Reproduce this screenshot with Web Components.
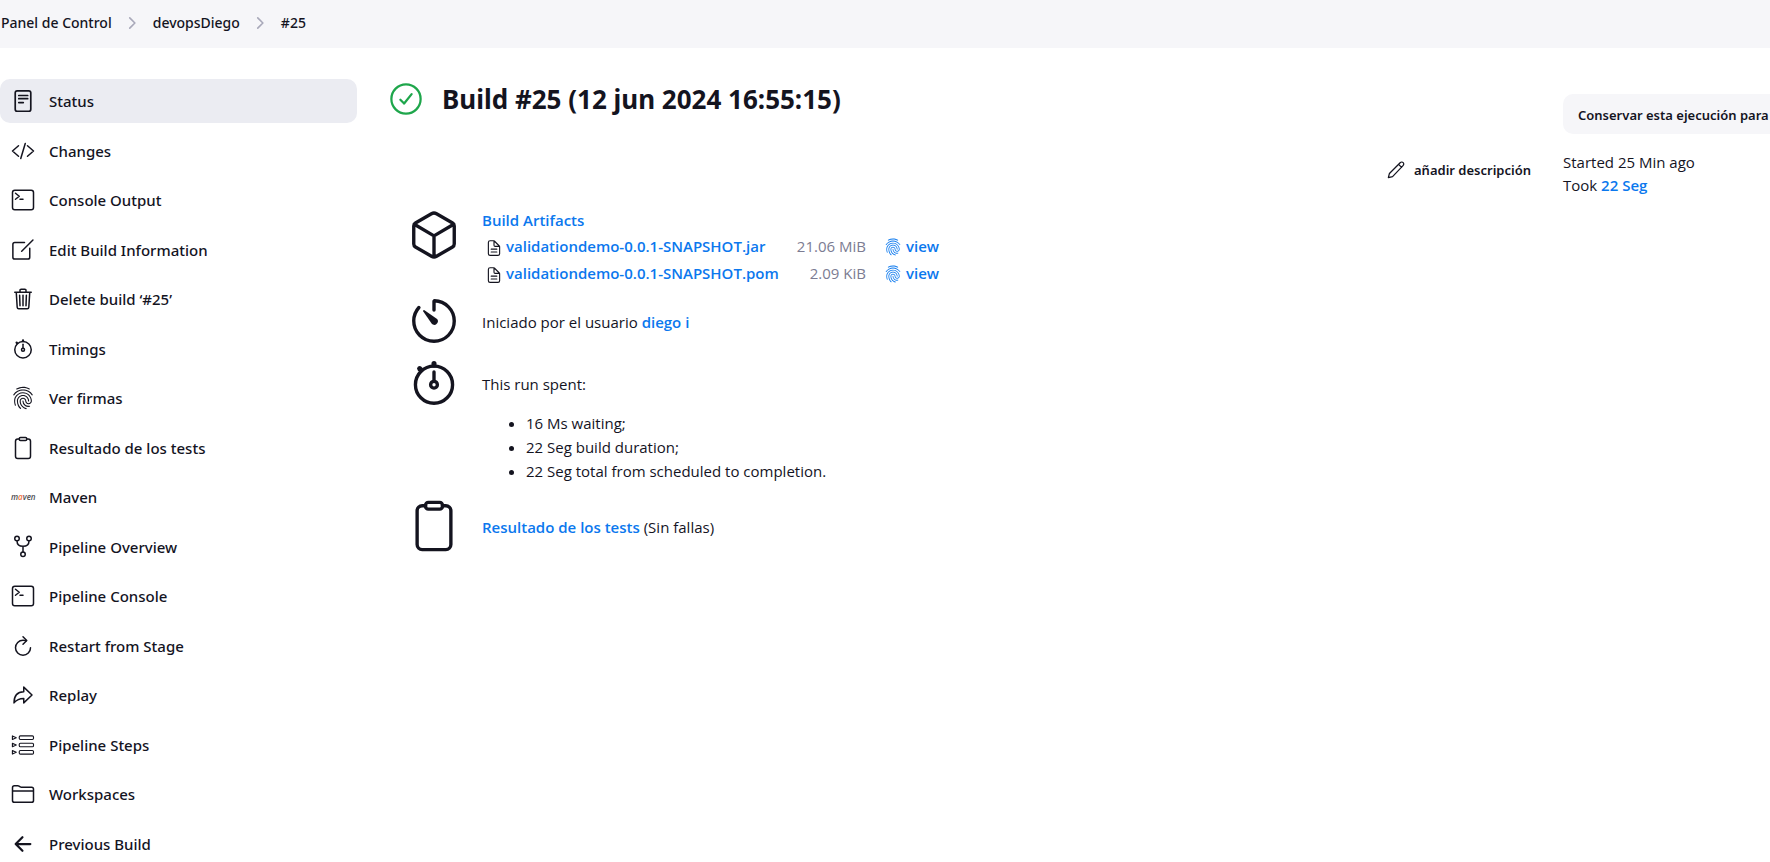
<!DOCTYPE html>
<html lang="es">
<head>
<meta charset="utf-8">
<meta name="viewport" content="width=device-width, initial-scale=1">
<title>Build #25</title>
<style>
  body {
    margin: 0;
    background: #fff;
    color: #14141f;
    font: 400 15px/24px "Noto Sans", "Open Sans", sans-serif;
    --link: #0b78ee;
    --muted: #7c7c92;
    --surface: #f6f6f9;
    --selected: #ebecf2;
    --success: #1ea64b;
  }
</style>
</head>
<body>
<build-page>
  <crumb-trail slot="top"></crumb-trail>
  <side-nav slot="side">
    <side-item icon="status" current>Status</side-item>
    <side-item icon="code">Changes</side-item>
    <side-item icon="terminal">Console Output</side-item>
    <side-item icon="edit">Edit Build Information</side-item>
    <side-item icon="trash">Delete build ‘#25’</side-item>
    <side-item icon="stopwatch">Timings</side-item>
    <side-item icon="fingerprint">Ver firmas</side-item>
    <side-item icon="clipboard">Resultado de los tests</side-item>
    <side-item icon="maven">Maven</side-item>
    <side-item icon="branch">Pipeline Overview</side-item>
    <side-item icon="terminal">Pipeline Console</side-item>
    <side-item icon="restart">Restart from Stage</side-item>
    <side-item icon="redo">Replay</side-item>
    <side-item icon="steps">Pipeline Steps</side-item>
    <side-item icon="folder">Workspaces</side-item>
    <side-item icon="back">Previous Build</side-item>
  </side-nav>
  <build-heading>Build #25 (12 jun 2024 16:55:15)</build-heading>
  <add-description>añadir descripción</add-description>
  <build-summary></build-summary>
  <run-facts slot="aside"></run-facts>
</build-page>

<script>
const ICONS = {
  status: '<g stroke-width="36"><rect x="90" y="38" width="332" height="436" rx="44"/><path d="M166 138h190M166 206h190M166 290h96"/></g>',
  code: '<path d="M160 368L32 256l128-112M352 368l128-112-128-112M304 96l-96 320"/>',
  terminal: '<rect x="32" y="48" width="448" height="416" rx="48"/><path d="M96 112l80 64-80 64M192 240h64"/>',
  edit: '<path d="M400 216v192a40 40 0 01-40 40H80a40 40 0 01-40-40V136a40 40 0 0140-40h208M228 284L468 44"/>',
  trash: '<path d="M112 112l20 320c.95 18.49 14.4 32 32 32h184c17.67 0 30.87-13.51 32-32l20-320M80 112h352M192 112V72a23.93 23.93 0 0124-24h80a23.93 23.93 0 0124 24v40M256 176v224M184 176l8 224M328 176l-8 224"/>',
  stopwatch: '<path d="M256 232v-80"/><path stroke-width="48" d="M256 88V72"/><path stroke-width="48" d="M132 132l-12-12"/><circle cx="256" cy="272" r="32"/><circle cx="256" cy="272" r="176"/>',
  timer: '<path d="M112.91 128A191.85 191.85 0 0064 254c-1.18 106.35 85.65 193.8 192 194 106.2.2 192-85.83 192-192 0-104.54-83.55-189.61-187.5-192a4.36 4.36 0 00-4.5 4.37V152"/><path fill="currentColor" stroke="none" d="M233.38 278.63l-79-113a8.13 8.13 0 0111.32-11.32l113 79a32.5 32.5 0 01-37.25 53.26 33.21 33.21 0 01-8.07-7.94z"/>',
  fingerprint: '<path fill="currentColor" stroke="none" d="M390.42 75.28a10.45 10.45 0 01-5.32-1.44C340.72 50.08 302.35 40 256.35 40c-45.77 0-89.23 11.28-128.76 33.84C122 77 115.11 74.8 111.87 69a12.4 12.4 0 014.63-16.32A281.81 281.81 0 01256.35 16c49.23 0 92.23 11.28 139.39 36.48a12 12 0 014.85 16.08 11.3 11.3 0 01-10.17 6.72zm-330.79 126a11.73 11.73 0 01-6.7-2.16 12.26 12.26 0 01-2.78-16.8c22.89-33.6 52-60 86.69-78.48 72.58-38.84 165.51-39.12 238.32-.24 34.68 18.48 63.8 44.64 86.69 78a12.29 12.29 0 01-2.78 16.8 11.26 11.26 0 01-16.18-2.88c-20.8-30.24-47.15-54-78.36-70.56-66.34-35.28-151.18-35.28-217.29.24-31.44 16.8-57.79 40.8-78.59 71a10 10 0 01-9.02 5.08zM204.1 491a10.66 10.66 0 01-8.09-3.6C175.9 466.48 165 453 149.55 424c-16-29.52-24.27-65.52-24.27-104.16 0-71.28 58.71-129.36 130.84-129.36S387 248.56 387 319.84a11.56 11.56 0 11-23.11 0c0-58.08-48.32-105.36-107.72-105.36S148.4 261.76 148.4 319.84c0 34.56 7.39 66.48 21.49 92.4 14.8 27.6 25 39.36 42.77 58.08a12.67 12.67 0 010 17 12.44 12.44 0 01-8.56 3.68zm165.75-44.4c-27.51 0-51.78-7.2-71.66-21.36a129.1 129.1 0 01-55-105.36 11.57 11.57 0 1123.12 0 104.28 104.28 0 0044.84 85.44c16.41 11.52 35.6 17 58.72 17a147.41 147.41 0 0024-2.4c6.24-1.2 12.25 3.12 13.4 9.84a11.92 11.92 0 01-9.47 13.92 152.28 152.28 0 01-27.95 2.88zM323.38 496a13 13 0 01-3-.48c-36.76-10.56-60.8-24.72-86-50.4-32.37-33.36-50.16-77.76-50.16-125.28 0-38.88 31.9-70.56 71.19-70.56s71.2 31.68 71.2 70.56c0 25.68 21.5 46.56 48.08 46.56s48.08-20.88 48.08-46.56c0-90.48-75.13-163.92-167.59-163.92-65.65 0-125.75 37.92-152.79 96.72-9 19.44-13.64 42.24-13.64 67.2 0 18.72 1.61 48.24 15.48 86.64 2.32 6.24-.69 13.2-6.7 15.36a11.34 11.34 0 01-14.79-7 276.39 276.39 0 01-16.88-95c0-28.8 5.32-55 15.72-77.76 30.75-67 98.94-110.4 173.6-110.4 105.18 0 190.71 84.24 190.71 187.92 0 38.88-31.9 70.56-71.2 70.56s-71.2-31.68-71.2-70.56C303.5 293.92 282 273 255.42 273s-48.08 20.88-48.08 46.56c0 41 15.26 79.44 43.23 108.24 22 22.56 43 35 75.59 44.16 6.24 1.68 9.71 8.4 8.09 14.64a11.39 11.39 0 01-10.87 9.4z"/>',
  clipboard: '<path d="M336 64h32a48 48 0 0148 48v320a48 48 0 01-48 48H144a48 48 0 01-48-48V112a48 48 0 0148-48h32"/><rect x="176" y="32" width="160" height="64" rx="26"/>',
  branch: '<circle cx="128" cy="72" r="48"/><circle cx="384" cy="72" r="48"/><circle cx="256" cy="408" r="48"/><path d="M128 120c0 76 48 120 128 120s128-44 128-120M256 240v120"/>',
  restart: '<path d="M320 146s24.36-12-64-12a160 160 0 10160 160"/><path d="M256 58l80 80-80 80"/>',
  redo: '<path d="M448 256L272 88v96C103.57 184 64 304.77 64 424c48.61-62.24 91.6-96 208-96v96z"/>',
  steps: '<g stroke-width="24"><path d="M30 62l82 38-82 38zM30 218l82 38-82 38zM30 374l82 38-82 38z"/><rect x="176" y="62" width="304" height="76" rx="24"/><rect x="176" y="218" width="304" height="76" rx="24"/><rect x="176" y="374" width="304" height="76" rx="24"/></g>',
  folder: '<path d="M440 432H72a40 40 0 01-40-40V120a40 40 0 0140-40h75.89a40 40 0 0122.19 6.72l27.84 18.56a40 40 0 0022.19 6.72H440a40 40 0 0140 40v240a40 40 0 01-40 40zM32 192h448"/>',
  back: '<path stroke-width="48" d="M244 400L100 256l144-144M120 256h292"/>',
  document: '<path d="M416 221.25V416a48 48 0 01-48 48H144a48 48 0 01-48-48V96a48 48 0 0148-48h98.75a32 32 0 0122.62 9.37l141.26 141.26a32 32 0 019.37 22.62zM256 56v120a32 32 0 0032 32h120M176 288h160M176 368h160"/>',
  cube: '<path d="M448 341.37V170.61A32 32 0 00432.11 143l-152-88.46a47.94 47.94 0 00-48.24 0L80 143a32 32 0 00-16 27.6v170.77A32 32 0 0080 369l152 88.46a48 48 0 0048.24 0L432 369a32 32 0 0016-27.63zM69 153.99l187 110 187-110M256 463.99v-200"/>',
  pencil: '<path d="M60 452l28-108L362 70c24-24 58-24 78-4s20 54-4 78L168 424zM322 112l78 78"/>',
  chevron: '<path stroke-width="52" d="M184 92l164 164-164 164"/>',
  success: '<g stroke-width="36"><circle cx="256" cy="256" r="234"/><path d="M346 178L226 328l-60-60"/></g>'
};

function define(name, markup, setup) {
  const template = document.createElement('template');
  template.innerHTML = markup;
  customElements.define(name, class extends HTMLElement {
    constructor() {
      super();
      this.attachShadow({ mode: 'open' }).append(template.content.cloneNode(true));
    }
    connectedCallback() { if (setup) setup(this, this.shadowRoot); }
  });
}

define('ui-icon', `
  <style>
    :host { display: block; flex: none; width: 24px; height: 24px; }
    svg { display: block; width: 100%; height: 100%; overflow: visible; }
    .word { display: grid; place-items: center; height: 100%; font: italic 600 8px/8px "Open Sans", sans-serif; color: #4b4b50; }
    .word b { color: #f0703c; font-weight: 600; }
  </style>
  <svg viewBox="0 0 512 512" fill="none" stroke="currentColor" stroke-width="32"
       stroke-linecap="round" stroke-linejoin="round" aria-hidden="true"></svg>`,
(host, root) => {
  const name = host.getAttribute('name');
  const svg = root.querySelector('svg');
  if (name === 'maven') {
    const word = document.createElement('div');
    word.className = 'word';
    word.innerHTML = '<span>m<b>a</b>ven</span>';
    svg.replaceWith(word);
  } else {
    svg.innerHTML = ICONS[name];
  }
});

define('crumb-trail', `
  <style>
    :host { display: block; background: var(--surface); }
    ol { display: flex; align-items: center; gap: 13px; height: 48px; margin: 0; padding: 0 0 2px 1px; box-sizing: border-box; list-style: none; font-size: 14px; font-weight: 500; }
    li { display: flex; align-items: center; gap: 12px; }
    a { color: inherit; text-decoration: none; }
    ui-icon { width: 16px; height: 16px; color: #a9a9ba; }
  </style>
  <nav aria-label="Breadcrumb"><ol>
    <li><a href="#">Panel de Control</a><ui-icon name="chevron"></ui-icon></li>
    <li><a href="#">devopsDiego</a><ui-icon name="chevron"></ui-icon></li>
    <li><a href="#">#25</a></li>
  </ol></nav>`);

define('side-nav', `
  <style>
    :host { display: block; }
    nav { display: flex; flex-direction: column; justify-content: space-between; min-height: 787px; }
  </style>
  <nav aria-label="Build"><slot></slot></nav>`);

define('side-item', `
  <style>
    :host { display: block; font-weight: 500; }
    a { display: flex; align-items: center; gap: 14px; height: 44px; padding-left: 11px; border-radius: 10px; color: inherit; text-decoration: none; }
    :host([current]) a { background: var(--selected); }
  </style>
  <a href="#"><ui-icon></ui-icon><span><slot></slot></span></a>`,
(host, root) => {
  const icon = document.createElement('ui-icon');
  icon.setAttribute('name', host.getAttribute('icon'));
  root.querySelector('ui-icon').replaceWith(icon);
  if (host.hasAttribute('current')) root.querySelector('a').setAttribute('aria-current', 'page');
});

define('build-heading', `
  <style>
    :host { display: flex; align-items: center; gap: 20px; height: 40px; }
    ui-icon { width: 32px; height: 32px; color: var(--success); }
    h1 { margin: 0; font-size: 26px; line-height: 40px; font-weight: 700; }
  </style>
  <ui-icon name="success"></ui-icon><h1><slot></slot></h1>`);

define('add-description', `
  <style>
    :host { display: flex; justify-content: flex-end; margin-top: 31px; padding-right: 32px; }
    a { display: flex; align-items: center; gap: 8px; height: 40px; color: inherit; font-size: 13px; font-weight: 600; text-decoration: none; }
    ui-icon { width: 20px; height: 20px; }
  </style>
  <a href="#"><ui-icon name="pencil"></ui-icon><span><slot></slot></span></a>`);

define('summary-row', `
  <style>
    :host { display: grid; grid-template-columns: 54px minmax(0, 1fr); gap: 21px; align-items: start; }
    ui-icon { width: 54px; height: 54px; }
    div { padding-top: 16px; }
    :host([tall]) div { padding-top: 0; }
  </style>
  <ui-icon></ui-icon><div><slot></slot></div>`,
(host, root) => {
  const icon = document.createElement('ui-icon');
  icon.setAttribute('name', host.getAttribute('icon'));
  root.querySelector('ui-icon').replaceWith(icon);
});

define('artifact-table', `
  <style>
    :host { display: block; }
    table { border-collapse: collapse; }
    td { height: 27px; padding: 0; }
    a { display: flex; align-items: center; color: var(--link); font-weight: 600; text-decoration: none; }
    ui-icon { width: 18px; height: 18px; }
    .file { padding-left: 3px; }
    .file a { gap: 3px; }
    .file ui-icon { color: #14141f; padding-top: 4px; }
    .size { padding: 0 18px; color: var(--muted); text-align: right; }
    .print a { gap: 4px; }
    .print ui-icon { padding-top: 2px; }
  </style>
  <table aria-label="Build Artifacts"><tbody>
    <tr><td class="file"><a href="#"><ui-icon name="document"></ui-icon><span>validationdemo-0.0.1-SNAPSHOT.jar</span></a></td><td class="size">21.06 MiB</td><td class="print"><a href="#"><ui-icon name="fingerprint"></ui-icon><span>view</span></a></td></tr>
    <tr><td class="file"><a href="#"><ui-icon name="document"></ui-icon><span>validationdemo-0.0.1-SNAPSHOT.pom</span></a></td><td class="size">2.09 KiB</td><td class="print"><a href="#"><ui-icon name="fingerprint"></ui-icon><span>view</span></a></td></tr>
  </tbody></table>`);

define('build-summary', `
  <style>
    :host { display: grid; gap: 8px; margin-top: 18px; padding-left: 17px; font-family: "Open Sans", "Noto Sans", sans-serif; }
    a { color: var(--link); font-weight: 600; text-decoration: none; }
    ul { margin: 15px 0 8px; padding-left: 44px; }
  </style>
  <summary-row icon="cube" tall>
    <a href="#">Build Artifacts</a>
    <artifact-table></artifact-table>
  </summary-row>
  <summary-row icon="timer">Iniciado por el usuario <a href="#">diego i</a></summary-row>
  <summary-row icon="stopwatch">This run spent:
    <ul>
      <li>16 Ms waiting;</li>
      <li>22 Seg build duration;</li>
      <li>22 Seg total from scheduled to completion.</li>
    </ul>
  </summary-row>
  <summary-row icon="clipboard"><a href="#">Resultado de los tests</a> (Sin fallas)</summary-row>`);

define('run-facts', `
  <style>
    :host { display: block; padding-top: 15px; white-space: nowrap; font-family: "Open Sans", "Noto Sans", sans-serif; line-height: 23px; }
    button { height: 40px; margin: 0 0 17px; padding: 2px 15px 0; border: 0; border-radius: 10px; background: var(--surface); color: inherit; font: 600 13px/24px "Noto Sans", "Open Sans", sans-serif; white-space: nowrap; }
    a { color: var(--link); font-weight: 600; text-decoration: none; }
  </style>
  <button type="button">Conservar esta ejecución para siempre</button>
  <div>Started 25 Min ago</div>
  <div>Took <a href="#">22 Seg</a></div>`);

define('build-page', `
  <style>
    :host { display: block; overflow-x: clip; }
    .body { display: grid; grid-template-columns: 357px minmax(0, 1fr) 207px; align-items: start; padding-top: 31px; }
    main { padding-left: 33px; }
  </style>
  <slot name="top"></slot>
  <div class="body">
    <slot name="side"></slot>
    <main><slot></slot></main>
    <slot name="aside"></slot>
  </div>`);
</script>
</body>
</html>
